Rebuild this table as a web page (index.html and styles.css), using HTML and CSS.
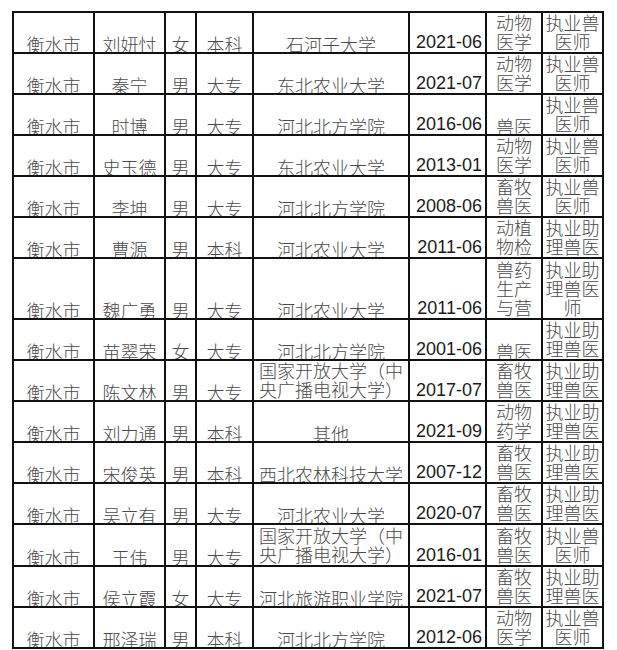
FILE: index.html
```html
<!DOCTYPE html>
<html lang="zh">
<head>
<meta charset="utf-8">
<title>名单</title>
<link rel="stylesheet" href="styles.css">
</head>
<body>
<table class="sheet">
  <colgroup>
    <col class="c-city"><col class="c-name"><col class="c-sex"><col class="c-deg"><col class="c-uni"><col class="c-date"><col class="c-major"><col class="c-cert">
  </colgroup>
  <tbody>
    <tr class="r41"><td>衡水市</td><td>刘妍忖</td><td>女</td><td>本科</td><td>石河子大学</td><td class="date">2021-06</td><td class="w">动物<br>医学</td><td class="w">执业兽<br>医师</td></tr>
    <tr class="r41"><td>衡水市</td><td>秦宁</td><td>男</td><td>大专</td><td>东北农业大学</td><td class="date">2021-07</td><td class="w">动物<br>医学</td><td class="w">执业兽<br>医师</td></tr>
    <tr class="r40"><td>衡水市</td><td>时博</td><td>男</td><td>大专</td><td>河北北方学院</td><td class="date">2016-06</td><td>兽医</td><td class="w">执业兽<br>医师</td></tr>
    <tr class="r41"><td>衡水市</td><td>史玉德</td><td>男</td><td>大专</td><td>东北农业大学</td><td class="date">2013-01</td><td class="w">动物<br>医学</td><td class="w">执业兽<br>医师</td></tr>
    <tr class="r41"><td>衡水市</td><td>李坤</td><td>男</td><td>大专</td><td>河北北方学院</td><td class="date">2008-06</td><td class="w">畜牧<br>兽医</td><td class="w">执业兽<br>医师</td></tr>
    <tr class="r41"><td>衡水市</td><td>曹源</td><td>男</td><td>本科</td><td>河北农业大学</td><td class="date">2011-06</td><td class="w">动植<br>物检</td><td class="w">执业助<br>理兽医</td></tr>
    <tr class="r61"><td>衡水市</td><td>魏广勇</td><td>男</td><td>大专</td><td>河北农业大学</td><td class="date">2011-06</td><td class="w">兽药<br>生产<br>与营</td><td class="w">执业助<br>理兽医<br>师</td></tr>
    <tr class="r40"><td>衡水市</td><td>苗翠荣</td><td>女</td><td>大专</td><td>河北北方学院</td><td class="date">2001-06</td><td>兽医</td><td class="w">执业助<br>理兽医</td></tr>
    <tr class="r41"><td>衡水市</td><td>陈文林</td><td>男</td><td>大专</td><td class="w">国家开放大学（中<br>央广播电视大学）</td><td class="date">2017-07</td><td class="w">畜牧<br>兽医</td><td class="w">执业助<br>理兽医</td></tr>
    <tr class="r41"><td>衡水市</td><td>刘力通</td><td>男</td><td>本科</td><td>其他</td><td class="date">2021-09</td><td class="w">动物<br>药学</td><td class="w">执业助<br>理兽医</td></tr>
    <tr class="r41"><td>衡水市</td><td>宋俊英</td><td>男</td><td>本科</td><td>西北农林科技大学</td><td class="date">2007-12</td><td class="w">畜牧<br>兽医</td><td class="w">执业助<br>理兽医</td></tr>
    <tr class="r40"><td>衡水市</td><td>吴立有</td><td>男</td><td>大专</td><td>河北农业大学</td><td class="date">2020-07</td><td class="w">畜牧<br>兽医</td><td class="w">执业助<br>理兽医</td></tr>
    <tr class="r42"><td>衡水市</td><td>王伟</td><td>男</td><td>大专</td><td class="w">国家开放大学（中<br>央广播电视大学）</td><td class="date">2016-01</td><td class="w">畜牧<br>兽医</td><td class="w">执业兽<br>医师</td></tr>
    <tr class="r41"><td>衡水市</td><td>侯立霞</td><td>女</td><td>大专</td><td>河北旅游职业学院</td><td class="date">2021-07</td><td class="w">畜牧<br>兽医</td><td class="w">执业助<br>理兽医</td></tr>
    <tr class="r39"><td>衡水市</td><td>邢泽瑞</td><td>男</td><td>本科</td><td>河北北方学院</td><td class="date">2012-06</td><td class="w">动物<br>医学</td><td class="w">执业兽<br>医师</td></tr>
  </tbody>
</table>
</body>
</html>
```
FILE: styles.css
```css
html, body {
  margin: 0;
  padding: 0;
  background: #ffffff;
}

.sheet {
  margin: 11px 0 0 12px;
  width: 590px;
  table-layout: fixed;
  border-collapse: collapse;
  font-family: "Noto Sans CJK SC", "Liberation Sans", sans-serif;
  font-size: 18px;
  font-weight: 300;
  line-height: 15px;
  color: #4a4a4a;
}

.c-city { width: 81px; }
.c-name { width: 71px; }
.c-sex { width: 31px; }
.c-deg { width: 57px; }
.c-uni { width: 156px; }
.c-date { width: 77px; }
.c-major { width: 56px; }
.c-cert { width: 61px; }

.sheet td {
  border: 2px solid #111111;
  padding: 0;
  text-align: center;
  vertical-align: bottom;
  white-space: nowrap;
  overflow: hidden;
}

.sheet td.w {
  line-height: 19px;
  padding-bottom: 1px;
}

.sheet td.date {
  font-family: "Liberation Sans", Arial, sans-serif;
  font-size: 18px;
  font-weight: 400;
  line-height: 19px;
  color: #1a1a1a;
  text-align: right;
  padding-right: 3px;
}

.r39 { height: 39px; }
.r40 { height: 40px; }
.r41 { height: 41px; }
.r42 { height: 42px; }
.r61 { height: 61px; }
```
